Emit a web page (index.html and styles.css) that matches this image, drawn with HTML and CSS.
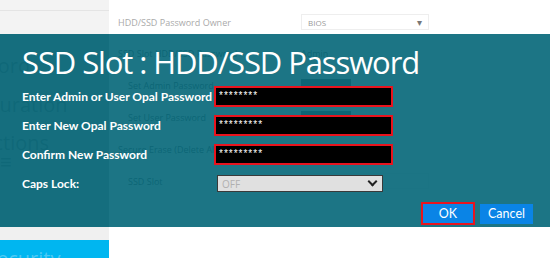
FILE: index.html
```html
<!DOCTYPE html>
<html lang="en">
<head>
  <meta charset="UTF-8" />
  <title>SSD Slot : HDD/SSD Password</title>
  <link rel="stylesheet" href="styles.css">
</head>
<body>
<div class="screen">
  <!-- sidebar behind the dialog -->
  <aside class="side">
    <div class="side-top"></div>
    <ul class="side-menu">
      <li class="m-pass">Password</li>
      <li class="m-conf">Configuration</li>
      <li class="m-restr">Restrictions</li>
      <li class="m-icon">&#8801;</li>
      <li class="m-boot">Boot</li>
    </ul>
    <div class="side-gap"></div>
    <div class="side-active">Security</div>
  </aside>

  <!-- settings page behind the dialog -->
  <main class="main">
    <div class="row row-owner">
      <span class="row-label">HDD/SSD Password Owner</span>
      <span class="row-select">BIOS <i class="caret">&#9662;</i></span>
    </div>
    <div class="row">
      <span class="row-label">SSD Slot HDD/SSD Password</span>
      <span class="row-value">Admin</span>
    </div>
    <div class="row">
      <span class="row-label sub">Set Admin Password</span>
      <span class="row-btn">Change</span>
    </div>
    <div class="row">
      <span class="row-label sub">Set User Password</span>
      <span class="row-btn">Change</span>
    </div>
    <div class="row">
      <span class="row-label">Secure Erase (Delete All Data)</span>
    </div>
    <div class="row">
      <span class="row-label sub">SSD Slot</span>
      <span class="row-select">Off</span>
    </div>
  </main>

  <!-- Password dialog -->
  <div class="dialog">
    <h1 class="dialog-title">SSD Slot : HDD/SSD Password</h1>
    <div class="dialog-form">
      <label>Enter Admin or User Opal Password</label>
      <div class="pw">********</div>
      <label>Enter New Opal Password</label>
      <div class="pw">*********</div>
      <label>Confirm New Password</label>
      <div class="pw">*********</div>
      <label>Caps Lock:</label>
      <div class="dd">OFF <i class="chev"></i></div>
    </div>
    <div class="dialog-btns">
      <button class="btn btn-ok">OK</button>
      <button class="btn">Cancel</button>
    </div>
  </div>
</div>
</body>
</html>
```

FILE: styles.css
```css
  body {
    margin: 0;
    background: #fff;
    font-family: 'Open Sans', 'Noto Sans', sans-serif;
    overflow: hidden;
  }

  .screen {
    position: relative;
    display: grid;
    grid-template-columns: 109px 1fr;
    width: 550px;
    height: 258px;
    overflow: hidden;
  }

  /* sidebar */
  .side {
    display: flex;
    flex-direction: column;
    background: #f3f3f3;
    overflow: hidden;
  }

  .side-top {
    height: 10px;
    border-bottom: 1px solid #e4e4e4;
    flex: none;
  }

  .side-menu {
    list-style: none;
    margin: 23px 0 0;
    padding: 0;
    height: 193px;
    flex: none;
    background: #b4b4b4;
    font-size: 20px;
    color: #707070;
    white-space: nowrap;
    overflow: hidden;
  }

  .side-menu li {
    margin-left: -60px;
    line-height: 24px;
  }

  .m-pass { margin-top: 20px; }
  .m-conf { margin-top: 15px; }
  .m-restr { margin-top: 14px; }
  .side-menu .m-icon { margin-left: 0; line-height: 14px; }
  .m-boot { margin-top: 44px; }

  .side-gap {
    height: 13px;
    background: #f0f0f0;
    flex: none;
  }

  .side-active {
    height: 18px;
    background: #00b6f0;
    color: #4cc9f4;
    font-size: 20px;
    line-height: 38px;
    margin-left: -14px;
    flex: none;
    overflow: hidden;
  }

  /* page content */
  .main {
    padding-left: 9px;
    font-size: 9px;
    color: #555;
  }

  .row {
    display: grid;
    grid-template-columns: 183px 128px;
    align-items: center;
    height: 32px;
  }

  .row-owner {
    height: 14px;
    margin-top: 14px;
    margin-bottom: 9px;
    color: #aaa;
  }

  .row-label.sub {
    padding-left: 10px;
  }

  .row-select {
    display: flex;
    justify-content: space-between;
    align-items: center;
    height: 14px;
    padding: 0 6px;
    border: 1px solid #eee;
    font-size: 8px;
    color: #999;
  }

  .caret {
    font-style: normal;
    color: #777;
    font-size: 10px;
  }

  .row-btn {
    width: 50px;
    height: 12px;
    background: #555;
  }

  /* dialog overlay */
  .dialog {
    position: absolute;
    left: 0;
    right: 0;
    top: 34px;
    height: 193px;
    background: rgba(6, 103, 121, 0.91);
    color: #fff;
    padding-left: 22px;
    box-sizing: border-box;
  }

  .dialog-title {
    margin: 7px 0 0;
    font-size: 31px;
    font-weight: 400;
    letter-spacing: -1.1px;
    line-height: 42px;
    white-space: nowrap;
  }

  .dialog-form {
    display: grid;
    grid-template-columns: 192px 179px;
    grid-auto-rows: 21px;
    row-gap: 8px;
    align-items: center;
    margin-top: 3px;
  }

  .dialog-form label {
    font-family: 'Lato', sans-serif;
    font-size: 12px;
    font-weight: 700;
    white-space: nowrap;
  }

  .pw {
    height: 21px;
    box-sizing: border-box;
    border: 2px solid #e8141e;
    background: #000;
    font-family: 'Liberation Sans', sans-serif;
    font-size: 10px;
    letter-spacing: 1px;
    line-height: 15px;
    padding-left: 3px;
  }

  .dd {
    display: flex;
    justify-content: space-between;
    align-items: center;
    width: 166px;
    height: 17px;
    margin-left: 3px;
    box-sizing: border-box;
    border: 1px solid #3a3a3a;
    background: #e0e0e0;
    color: #b0b0b0;
    font-size: 10px;
    padding: 0 6px 0 4px;
  }

  .chev {
    width: 5px;
    height: 5px;
    border-right: 2px solid #222;
    border-bottom: 2px solid #222;
    transform: rotate(45deg);
    margin-top: -4px;
  }

  .dialog-btns {
    display: flex;
    justify-content: flex-end;
    align-items: center;
    gap: 5px;
    margin-top: 8px;
    padding-right: 17px;
  }

  .btn {
    width: 53px;
    height: 20px;
    border: none;
    background: #0a84e6;
    color: #fff;
    font-family: 'Lato', sans-serif;
    font-size: 12.5px;
    padding: 0;
  }

  .btn-ok {
    width: 54px;
    height: 23px;
    border: 2px solid #e8141e;
  }
```
